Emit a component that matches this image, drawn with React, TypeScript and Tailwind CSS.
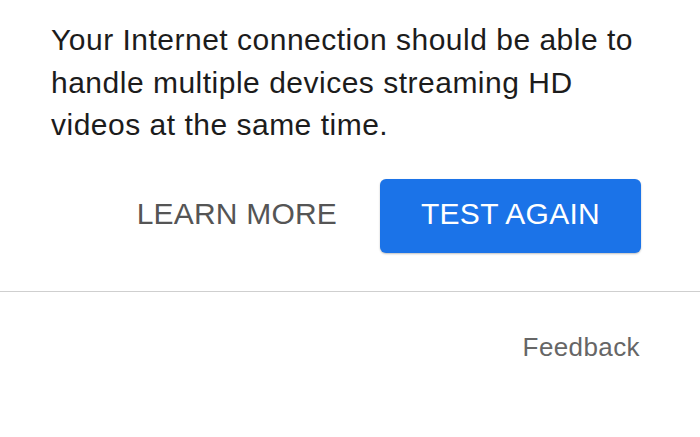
export default function App() {
  return (
    <div className="w-[700px] h-[437px] bg-white overflow-hidden" style={{ fontFamily: '"Liberation Sans", Arial, sans-serif' }}>
      <div className="pl-[51px] pr-[51px] pt-[19px]">
        <p className="text-[30px] leading-[42.5px] tracking-[0.5px] text-[#1c1c1c]">
          Your Internet connection should be able to handle multiple devices streaming HD videos at the same time.
        </p>
      </div>
      <div className="flex justify-end items-center pr-[59px] mt-[32px] gap-[43px]">
        <button className="text-[30px] tracking-[0.2px] text-[#555555] leading-none pb-[4px]">LEARN MORE</button>
        <button className="w-[261px] h-[74px] pb-[4px] rounded-[6px] bg-[#1b73e8] text-white text-[30px] tracking-[0.3px] leading-none shadow-[0_1px_2px_rgba(0,0,0,0.25)]">
          TEST AGAIN
        </button>
      </div>
      <div className="mt-[38px] h-px bg-[#cfcfcf]" />
      <div className="flex justify-end pr-[60px] pt-[42px]">
        <span className="text-[26px] tracking-[0.4px] text-[#666666] leading-none">Feedback</span>
      </div>
    </div>
  );
}
